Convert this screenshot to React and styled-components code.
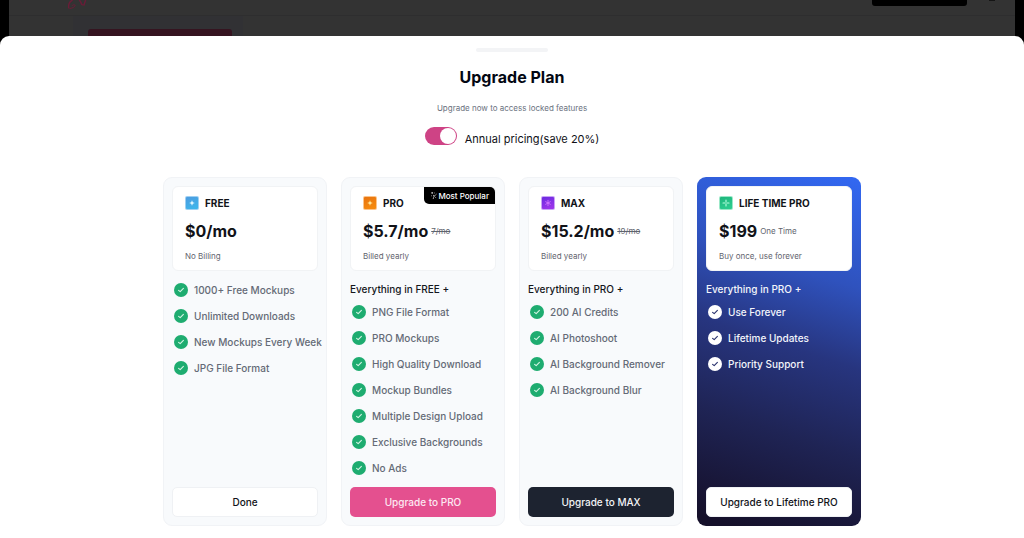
import React, { useState } from 'react';
import styled, { createGlobalStyle, css } from 'styled-components';

const GlobalStyle = createGlobalStyle`
  * {
    box-sizing: border-box;
  }

  body {
    margin: 0;
    background: #000000;
    color: #0f1117;
    font-family: Inter, 'Liberation Sans', sans-serif;
    font-size: 10px;
    overflow: hidden;
  }

  h1, h2, p, ul {
    margin: 0;
    padding: 0;
  }
`;

const Screen = styled.div`
  min-height: 100vh;
  display: flex;
  flex-direction: column;
`;

/* Strip of the dimmed page that stays visible above the sheet */
const DimmedPage = styled.div`
  height: 36px;
  margin: 0 9px;
  background: #333333;
  overflow: hidden;
`;

const DimmedBar = styled.div`
  height: 16px;
  padding: 0 20px 0 59px;
  display: flex;
  align-items: flex-start;
  border-bottom: 1px solid #2e2e2f;
`;

const DimmedAction = styled.div`
  width: 95px;
  height: 6px;
  margin-left: auto;
  background: #000000;
  border-radius: 0 0 3px 3px;
`;

const DimmedDot = styled.div`
  width: 6px;
  height: 1px;
  margin-left: 22px;
  background: #151515;
`;

const DimmedPanel = styled.div`
  width: 170px;
  height: 20px;
  margin-left: 64px;
  padding: 13px 11px 0 15px;
  background: #313134;
`;

const DimmedTab = styled.div`
  height: 7px;
  background: #351420;
  border-radius: 3px 3px 0 0;
`;

const Sheet = styled.main`
  flex: 1;
  display: flex;
  flex-direction: column;
  align-items: center;
  padding: 12px 16px;
  background: #ffffff;
  border-radius: 9px 9px 0 0;
`;

const Handle = styled.div`
  width: 72px;
  height: 4px;
  background: #f3f4f6;
  border-radius: 2px;
`;

const Title = styled.h1`
  margin-top: 14px;
  font-size: 16px;
  line-height: 22px;
  font-weight: 700;
  color: #030712;
`;

const Subtitle = styled.p`
  margin-top: 14px;
  font-size: 8px;
  line-height: 12px;
  color: #6b7280;
`;

const BillingToggle = styled.label`
  margin-top: 13px;
  height: 20px;
  display: flex;
  align-items: flex-start;
  gap: 8px;
  font-size: 11px;
  line-height: 24px;
  cursor: pointer;
`;

const Switch = styled.input`
  appearance: none;
  width: 32px;
  height: 18px;
  margin: 0;
  padding: 1px;
  display: flex;
  justify-content: ${props => (props.checked ? 'flex-end' : 'flex-start')};
  background: ${props => (props.checked ? '#ce4385' : '#d1d5db')};
  border-radius: 9px;
  cursor: pointer;

  &::before {
    content: '';
    width: 16px;
    height: 16px;
    background: #ffffff;
    border-radius: 50%;
  }
`;

const Plans = styled.div`
  width: 100%;
  max-width: 698px;
  margin-top: 30px;
  display: grid;
  grid-template-columns: repeat(4, minmax(0, 1fr));
  gap: 14px;
`;

const PlanCard = styled.section`
  min-height: 349px;
  padding: 8px;
  display: flex;
  flex-direction: column;
  border: 1px solid #f1f3f6;
  border-radius: 9px;
  background: #f8fafc;
  color: #15171c;

  ${props => props.$featured && css`
    border-color: transparent;
    background: linear-gradient(198deg, #3268f2 0%, #2f52bd 28%, #27357f 48%, #1f2455 70%, #15102a 97%) border-box;
    color: #f3f5fb;
  `}
`;

const PlanSummary = styled.div`
  position: relative;
  height: 85px;
  padding: 8px 12px;
  background: #ffffff;
  border: 1px solid #f1f3f5;
  border-radius: 6px;
  color: #111318;
`;

const PlanName = styled.h2`
  display: flex;
  align-items: center;
  gap: 6px;
  font-size: 10px;
  line-height: 16px;
  font-weight: 700;
`;

const PriceRow = styled.div`
  margin-top: 8px;
  display: flex;
  align-items: center;
  gap: 3px;
  white-space: nowrap;
`;

const Price = styled.strong`
  font-size: 16px;
  line-height: 24px;
  font-weight: 700;
`;

const PriceNote = styled.span`
  font-size: 8px;
  line-height: 12px;
  color: #5f646e;
  text-decoration: ${props => (props.$struck ? 'line-through' : 'none')};
`;

const Billing = styled.p`
  margin-top: 7px;
  font-size: 8px;
  line-height: 12px;
  color: #5f646e;
`;

const PopularBadge = styled.span`
  position: absolute;
  top: 0;
  right: 0;
  height: 17px;
  padding: 0 6px;
  display: flex;
  align-items: center;
  background: #000000;
  border-radius: 0 5px 0 5px;
  color: #ffffff;
  font-size: 8px;
  font-weight: 500;
`;

const Includes = styled.p`
  margin-top: 10px;
  font-weight: 500;
  line-height: 16px;
`;

const Features = styled.ul`
  margin: ${props => (props.$first ? '11px 0 0 2px' : '7px 0 0 2px')};
  display: flex;
  flex-direction: column;
  gap: 10px;
  list-style: none;
`;

const Feature = styled.li`
  height: 16px;
  display: flex;
  align-items: center;
  gap: 6px;
  font-weight: 500;
  color: ${props => (props.$featured ? '#f3f5fb' : '#646a76')};
  white-space: nowrap;

  svg {
    flex: none;
  }
`;

const buttonTones = {
  light: css`
    background: #ffffff;
    border-color: #eff1f4;
    color: #111318;
  `,
  pink: css`
    background: #e4508f;
    color: #fde8f2;
  `,
  dark: css`
    background: #1d2330;
    color: #f3f4f6;
  `,
};

const PlanButton = styled.button`
  height: 30px;
  margin-top: auto;
  padding: 0;
  border: 1px solid transparent;
  border-radius: 5px;
  font-family: inherit;
  font-size: 10px;
  font-weight: 500;
  white-space: nowrap;
  cursor: pointer;
  ${props => buttonTones[props.$tone]}
`;

const Check = ({ featured }) => (
  <svg width="14" height="14" viewBox="0 0 14 14" aria-hidden="true">
    <circle cx="7" cy="7" r="7" fill={featured ? '#ffffff' : '#1eac70'} />
    <path
      d="M4.6 7.3 6.2 8.7 9.4 5.4"
      fill="none"
      stroke={featured ? '#27306c' : '#d5f5e5'}
      strokeWidth="1.1"
      strokeLinecap="round"
      strokeLinejoin="round"
    />
  </svg>
);

const glyphs = {
  free: <path d="M7 4.2 7.8 6.2 9.8 7 7.8 7.8 7 9.8 6.2 7.8 4.2 7 6.2 6.2Z" fill="#e8faff" />,
  pro: <path d="M7 4.2 7.7 6.3 9.8 7 7.7 7.7 7 9.8 6.3 7.7 4.2 7 6.3 6.3Z" fill="#fff0a8" />,
  max: (
    <path
      d="M7 4.3V9.7M4.7 5.7 9.3 8.3M9.3 5.7 4.7 8.3"
      stroke="#d97bff"
      strokeWidth="0.8"
      strokeLinecap="round"
    />
  ),
  lifetime: (
    <path
      d="M7 4V6M7 8V10M4 7H6M8 7H10"
      stroke="#b7ffe0"
      strokeWidth="1.1"
      strokeLinecap="round"
    />
  ),
};

const PlanIcon = ({ id, from, to, edge }) => (
  <svg width="14" height="14" viewBox="0 0 14 14" aria-hidden="true">
    <defs>
      <linearGradient id={`fill-${id}`} x1="0" y1="0" x2="0.4" y2="1">
        <stop offset="0" stopColor={from} />
        <stop offset="1" stopColor={to} />
      </linearGradient>
    </defs>
    <rect width="14" height="14" rx="2" fill={edge} />
    <rect x="1" y="1" width="12" height="12" rx="1" fill={`url(#fill-${id})`} />
    {glyphs[id]}
  </svg>
);

const Sparkles = () => (
  <svg width="8" height="9" viewBox="0 0 8 9" fill="none" stroke="#d6d6d6" aria-hidden="true">
    <path d="M2.2 1V2.8M1.3 1.9H3.1M3 4.2 4.4 4.8 3.6 6.4 3.2 8" strokeWidth="0.8" />
    <path d="M4.4 4.8 5.4 4.2 6.6 3M4.6 1.6V2.4M1 4.8H1.8M5.6 6V6.8" strokeWidth="0.7" />
  </svg>
);

const Logo = () => (
  <svg width="20" height="10" viewBox="0 0 20 10" fill="none" stroke="#6a1c37" aria-hidden="true">
    <path d="M0.8 8.4C0 4.4 1.8 1.4 4.6 0" strokeWidth="1.5" />
    <path d="M11.2 0C12.4 1 13.2 2.6 13.8 4.8M13.6 4.6 16 5 17.6 0" strokeWidth="1.4" />
    <path d="M1.4 8.4C4 8.4 6.8 7.2 7.2 5.2 6 4.4 4.6 4.8 4 5.8" strokeWidth="1" />
  </svg>
);

const plans = [
  {
    id: 'free',
    name: 'FREE',
    price: { yearly: '$0/mo', monthly: '$0/mo' },
    billing: 'No Billing',
    icon: { from: '#4d9be0', to: '#3fb4ea', edge: '#9fd0f2' },
    features: ['1000+ Free Mockups', 'Unlimited Downloads', 'New Mockups Every Week', 'JPG File Format'],
    action: 'Done',
    tone: 'light',
  },
  {
    id: 'pro',
    name: 'PRO',
    price: { yearly: '$5.7/mo', monthly: '$7/mo' },
    oldPrice: '7/mo',
    popular: true,
    icon: { from: '#e8730f', to: '#f58a0f', edge: '#fbc48c' },
    includes: 'Everything in FREE +',
    features: [
      'PNG File Format',
      'PRO Mockups',
      'High Quality Download',
      'Mockup Bundles',
      'Multiple Design Upload',
      'Exclusive Backgrounds',
      'No Ads',
    ],
    action: 'Upgrade to PRO',
    tone: 'pink',
  },
  {
    id: 'max',
    name: 'MAX',
    price: { yearly: '$15.2/mo', monthly: '$19/mo' },
    oldPrice: '19/mo',
    icon: { from: '#6a2be0', to: '#9a35ea', edge: '#c9a4f6' },
    includes: 'Everything in PRO +',
    features: ['200 AI Credits', 'AI Photoshoot', 'AI Background Remover', 'AI Background Blur'],
    action: 'Upgrade to MAX',
    tone: 'dark',
  },
  {
    id: 'lifetime',
    name: 'LIFE TIME PRO',
    price: { yearly: '$199', monthly: '$199' },
    note: 'One Time',
    billing: 'Buy once, use forever',
    featured: true,
    icon: { from: '#1fb57c', to: '#2ccb8e', edge: '#9be8c8' },
    includes: 'Everything in PRO +',
    features: ['Use Forever', 'Lifetime Updates', 'Priority Support'],
    action: 'Upgrade to Lifetime PRO',
    tone: 'light',
  },
];

const Plan = ({ plan, annual }) => (
  <PlanCard $featured={plan.featured}>
    <PlanSummary>
      <PlanName>
        <PlanIcon id={plan.id} {...plan.icon} />
        {plan.name}
      </PlanName>
      {plan.popular && (
        <PopularBadge>
          <Sparkles />
          Most Popular
        </PopularBadge>
      )}
      <PriceRow>
        <Price>{annual ? plan.price.yearly : plan.price.monthly}</Price>
        {annual && plan.oldPrice && <PriceNote as="s" $struck>{plan.oldPrice}</PriceNote>}
        {plan.note && <PriceNote>{plan.note}</PriceNote>}
      </PriceRow>
      <Billing>{plan.billing || (annual ? 'Billed yearly' : 'Billed monthly')}</Billing>
    </PlanSummary>

    {plan.includes && <Includes>{plan.includes}</Includes>}
    <Features $first={!plan.includes}>
      {plan.features.map(feature => (
        <Feature key={feature} $featured={plan.featured}>
          <Check featured={plan.featured} />
          {feature}
        </Feature>
      ))}
    </Features>

    <PlanButton type="button" $tone={plan.tone}>{plan.action}</PlanButton>
  </PlanCard>
);

const App = () => {
  const [annual, setAnnual] = useState(true);

  return (
    <Screen>
      <GlobalStyle />
      <DimmedPage aria-hidden="true">
        <DimmedBar>
          <Logo />
          <DimmedAction />
          <DimmedDot />
        </DimmedBar>
        <DimmedPanel>
          <DimmedTab />
        </DimmedPanel>
      </DimmedPage>

      <Sheet>
        <Handle />
        <Title>Upgrade Plan</Title>
        <Subtitle>Upgrade now to access locked features</Subtitle>
        <BillingToggle>
          <Switch
            type="checkbox"
            role="switch"
            checked={annual}
            onChange={e => setAnnual(e.target.checked)}
          />
          Annual pricing(save 20%)
        </BillingToggle>

        <Plans>
          {plans.map(plan => (
            <Plan key={plan.id} plan={plan} annual={annual} />
          ))}
        </Plans>
      </Sheet>
    </Screen>
  );
};

export default App;
